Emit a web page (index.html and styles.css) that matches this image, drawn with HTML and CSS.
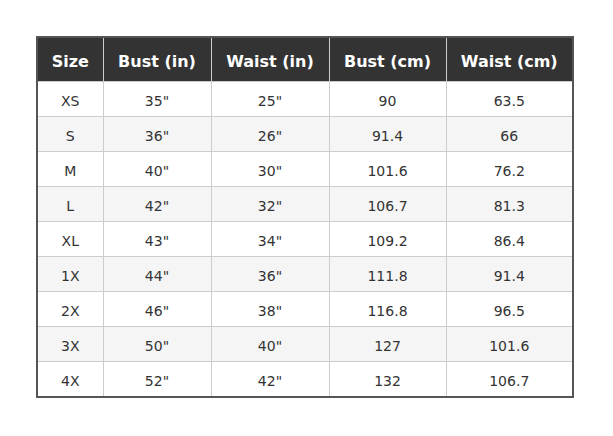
FILE: index.html
```html
<!DOCTYPE html>
<html>
<head>
<meta charset="utf-8">
<link rel="stylesheet" href="styles.css">
</head>
<body>
<div class="wrap">
<table class="chart">
  <colgroup>
    <col class="c1"><col class="c2"><col class="c3"><col class="c4"><col class="c5">
  </colgroup>
  <thead>
    <tr><th>Size</th><th>Bust (in)</th><th>Waist (in)</th><th>Bust (cm)</th><th>Waist (cm)</th></tr>
  </thead>
  <tbody>
    <tr><td>XS</td><td>35"</td><td>25"</td><td>90</td><td>63.5</td></tr>
    <tr><td>S</td><td>36"</td><td>26"</td><td>91.4</td><td>66</td></tr>
    <tr><td>M</td><td>40"</td><td>30"</td><td>101.6</td><td>76.2</td></tr>
    <tr><td>L</td><td>42"</td><td>32"</td><td>106.7</td><td>81.3</td></tr>
    <tr><td>XL</td><td>43"</td><td>34"</td><td>109.2</td><td>86.4</td></tr>
    <tr><td>1X</td><td>44"</td><td>36"</td><td>111.8</td><td>91.4</td></tr>
    <tr><td>2X</td><td>46"</td><td>38"</td><td>116.8</td><td>96.5</td></tr>
    <tr><td>3X</td><td>50"</td><td>40"</td><td>127</td><td>101.6</td></tr>
    <tr><td>4X</td><td>52"</td><td>42"</td><td>132</td><td>106.7</td></tr>
  </tbody>
</table>
</div>
</body>
</html>
```

FILE: styles.css
```css
html, body {
  margin: 0;
  padding: 0;
  background: #fff;
}
.wrap {
  padding: 36px 0 0 36px;
}
.chart {
  border-collapse: collapse;
  border: 2px solid #555;
  width: 536px;
  table-layout: fixed;
  font-family: "DejaVu Sans", Verdana, sans-serif;
}
.c1 { width: 66px; }
.c2 { width: 108px; }
.c3 { width: 118px; }
.c4 { width: 117px; }
.c5 { width: 127px; }
.chart th {
  background: #333;
  color: #fff;
  font-weight: bold;
  font-size: 16px;
  height: 39px;
  padding: 4px 0 0 0;
  border: 1px solid #ccc;
  border-top: 2px solid #555;
  text-align: center;
  vertical-align: middle;
}
.chart td {
  color: #333;
  font-size: 14px;
  height: 30px;
  padding: 4px 0 0 0;
  border: 1px solid #ccc;
  text-align: center;
  vertical-align: middle;
}
.chart tbody tr:nth-child(even) td {
  background: #f5f5f5;
}
```
